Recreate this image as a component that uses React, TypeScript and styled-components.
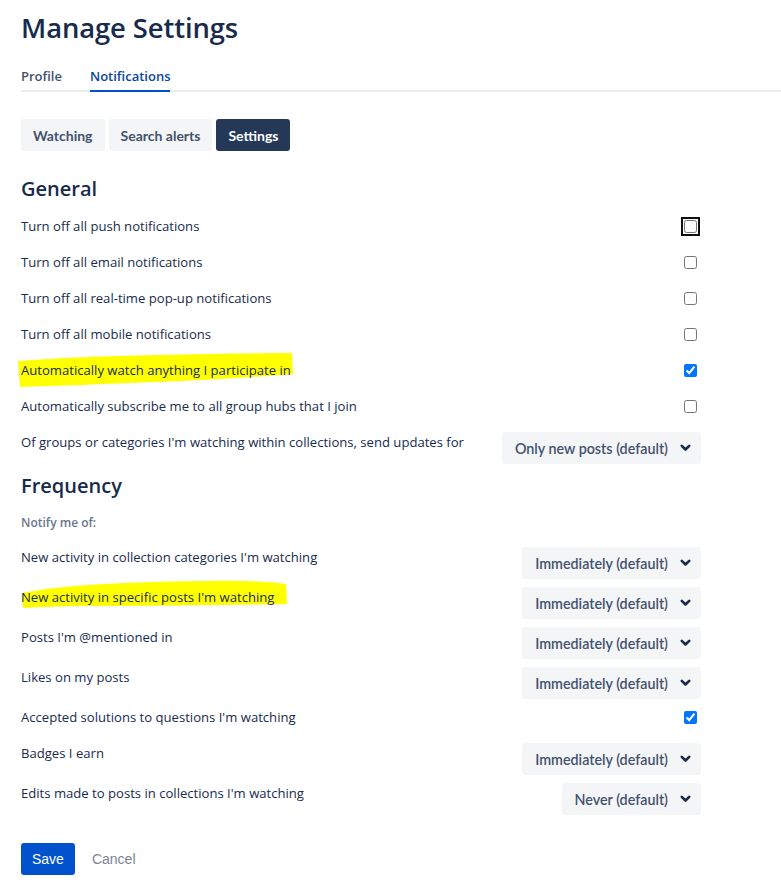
import React from "react";
import styled, { createGlobalStyle } from "styled-components";

const Global = createGlobalStyle`
  html, body { margin: 0; padding: 0; background: #ffffff; }
  body { font-family: "Open Sans", "Noto Sans", Arial, sans-serif; color: #172b4d; }
  * { box-sizing: border-box; }
`;

const Page = styled.div`
  padding: 10px 0 0 21px;
  width: 781px;
`;

const Title = styled.h1`
  margin: 0;
  font-size: 27.4px;
  line-height: 36px;
  font-weight: 600;
  color: #172b4d;
  letter-spacing: -0.1px;
`;

const TabNav = styled.nav`
  margin-top: 20px;
  display: flex;
  gap: 28px;
  border-bottom: 2px solid #ebecf0;
`;

const Tab = styled.a<{ $active?: boolean }>`
  font-size: 13px;
  line-height: 20px;
  font-weight: 600;
  padding-bottom: 4px;
  margin-bottom: -2px;
  color: ${(p) => (p.$active ? "#0747a6" : "#42526e")};
  border-bottom: 2px solid ${(p) => (p.$active ? "#0052cc" : "transparent")};
  text-decoration: none;
`;

const Form = styled.div`
  width: 680px;
`;

const SubTabs = styled.div`
  margin-top: 27px;
  display: flex;
  gap: 4px;
`;

const SubTab = styled.button<{ $active?: boolean }>`
  height: 32px;
  padding: 0 12px;
  border: none;
  border-radius: 3px;
  font-family: Lato, "Open Sans", sans-serif;
  font-size: 14px;
  font-weight: 700;
  background: ${(p) => (p.$active ? "#253858" : "#f4f5f7")};
  color: ${(p) => (p.$active ? "#ffffff" : "#42526e")};
`;

const SectionTitle = styled.h2<{ $top: number; $bottom: number }>`
  margin: ${(p) => p.$top}px 0 ${(p) => p.$bottom}px;
  font-size: 20px;
  line-height: 24px;
  font-weight: 600;
  color: #172b4d;
`;

const Hint = styled.div`
  font-size: 12px;
  line-height: 16px;
  font-weight: 600;
  color: #6b778c;
  margin: 0 0 16px;
`;

const Row = styled.div<{ $kind: "check" | "select" }>`
  display: flex;
  justify-content: space-between;
  align-items: flex-start;
  margin-bottom: ${(p) => (p.$kind === "check" ? 16 : 8)}px;
  min-height: ${(p) => (p.$kind === "check" ? 20 : 32)}px;
`;

const Label = styled.span`
  position: relative;
  font-size: 13.1px;
  line-height: 20px;
  color: #172b4d;
`;

const LabelText = styled.span`
  position: relative;
  z-index: 1;
`;

const Highlight = styled.svg`
  position: absolute;
  z-index: 0;
  pointer-events: none;
`;

const CheckWrap = styled.span`
  display: flex;
  align-items: center;
  height: 20px;
  margin-right: 4px;
`;

const Check = styled.input<{ $focus?: boolean }>`
  margin: 0;
  width: 13px;
  height: 13px;
  accent-color: #0075ff;
  ${(p) =>
    p.$focus
      ? `outline: 2px solid #101010; outline-offset: 1px; border-radius: 3px;`
      : ""}
`;

const Select = styled.button`
  display: flex;
  align-items: center;
  height: 32px;
  padding: 0 10px 0 13px;
  border: none;
  border-radius: 3px;
  background: #f4f5f7;
  color: #42526e;
  font-family: Lato, "Open Sans", sans-serif;
  font-size: 14.3px;
  font-weight: 600;
  gap: 12px;
`;

const Actions = styled.div`
  margin-top: 28px;
  display: flex;
  align-items: center;
  gap: 17px;
`;

const Primary = styled.button`
  height: 32px;
  padding: 0 11px;
  border: none;
  border-radius: 3px;
  background: #0052cc;
  color: #ffffff;
  font-family: "Liberation Sans", Arial, sans-serif;
  font-size: 14px;
`;

const Subtle = styled.button`
  border: none;
  background: none;
  padding: 0;
  color: #7a869a;
  font-family: "Liberation Sans", Arial, sans-serif;
  font-size: 14px;
`;

const Chevron = () => (
  <svg width="11" height="8" viewBox="0 0 11 8">
    <polyline points="1.8,1.8 5.5,5.5 9.2,1.8" fill="none" stroke="#172b4d" strokeWidth="2.6" strokeLinecap="round" strokeLinejoin="round" />
  </svg>
);

type HL = { left: number; top: number; w: number; h: number; d: string };

const HL1: HL = {
  left: -5,
  top: -18,
  w: 280,
  h: 36,
  d: "M2 9 C 40 6, 90 4, 140 3 C 190 2, 240 1, 276 1 L 277 22 C 240 25, 190 28, 140 30 C 90 32, 40 34, 4 35 Z",
};
const HL2: HL = {
  left: 0,
  top: -19,
  w: 268,
  h: 30,
  d: "M1 15 C 30 9, 70 6, 130 4 C 180 3, 230 1, 265 6 L 266 26 C 200 27, 120 28, 60 28 C 40 28, 20 29, 2 30 Z",
};

const Item = ({ text, hl }: { text: string; hl?: HL }) => (
  <Label>
    {hl && (
      <Highlight
        width={hl.w}
        height={hl.h}
        viewBox={`0 0 ${hl.w} ${hl.h}`}
        style={{ left: hl.left, top: hl.top + 10 }}
      >
        <path d={hl.d} fill="#ffff00" />
      </Highlight>
    )}
    <LabelText>{text}</LabelText>
  </Label>
);

const CheckRow = ({ text, checked, focus, hl }: { text: string; checked?: boolean; focus?: boolean; hl?: HL }) => (
  <Row $kind="check">
    <Item text={text} hl={hl} />
    <CheckWrap>
      <Check type="checkbox" defaultChecked={checked} $focus={focus} />
    </CheckWrap>
  </Row>
);

const SelectRow = ({ text, value, hl }: { text: string; value: string; hl?: HL }) => (
  <Row $kind="select">
    <Item text={text} hl={hl} />
    <Select>
      {value}
      <Chevron />
    </Select>
  </Row>
);

export default function App() {
  return (
    <Page>
      <Global />
      <Title>Manage Settings</Title>
      <TabNav>
        <Tab>Profile</Tab>
        <Tab $active>Notifications</Tab>
      </TabNav>
      <Form>
        <SubTabs>
          <SubTab>Watching</SubTab>
          <SubTab>Search alerts</SubTab>
          <SubTab $active>Settings</SubTab>
        </SubTabs>

        <SectionTitle $top={26} $bottom={15}>General</SectionTitle>
        <CheckRow text="Turn off all push notifications" focus />
        <CheckRow text="Turn off all email notifications" />
        <CheckRow text="Turn off all real-time pop-up notifications" />
        <CheckRow text="Turn off all mobile notifications" />
        <CheckRow text="Automatically watch anything I participate in" checked hl={HL1} />
        <CheckRow text="Automatically subscribe me to all group hubs that I join" />
        <SelectRow text="Of groups or categories I'm watching within collections, send updates for" value="Only new posts (default)" />

        <SectionTitle $top={10} $bottom={17}>Frequency</SectionTitle>
        <Hint>Notify me of:</Hint>
        <SelectRow text="New activity in collection categories I'm watching" value="Immediately (default)" />
        <SelectRow text="New activity in specific posts I'm watching" value="Immediately (default)" hl={HL2} />
        <SelectRow text="Posts I'm @mentioned in" value="Immediately (default)" />
        <SelectRow text="Likes on my posts" value="Immediately (default)" />
        <CheckRow text="Accepted solutions to questions I'm watching" checked />
        <SelectRow text="Badges I earn" value="Immediately (default)" />
        <SelectRow text="Edits made to posts in collections I'm watching" value="Never (default)" />

        <Actions>
          <Primary>Save</Primary>
          <Subtle>Cancel</Subtle>
        </Actions>
      </Form>
    </Page>
  );
}
